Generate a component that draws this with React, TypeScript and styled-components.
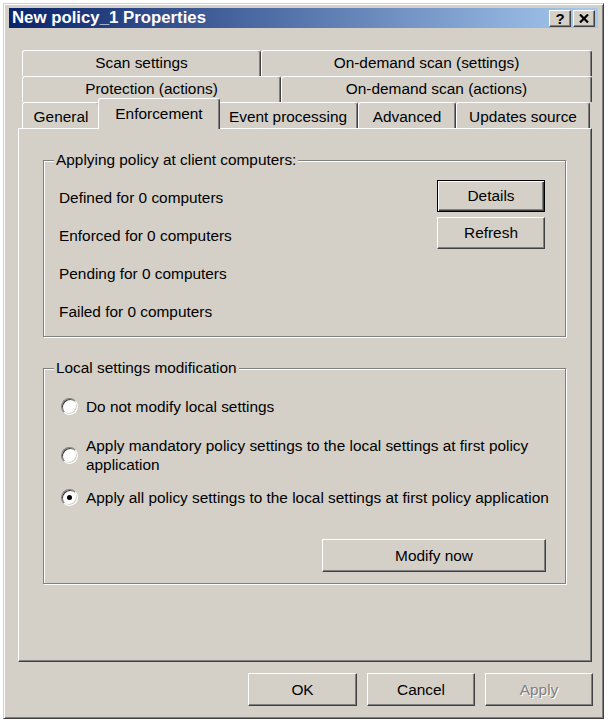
import React from 'react';
import styled, { createGlobalStyle, css } from 'styled-components';

const FACE = '#d4d0c8';
const SHADOW = '#808080';
const DARK = '#404040';

const GlobalStyle = createGlobalStyle`
  html, body {
    margin: 0;
    padding: 0;
    background: #fff;
  }
  body {
    font-family: 'Liberation Sans', Arial, sans-serif;
    font-size: 15.4px;
    color: #000;
  }
`;

const Window = styled.div`
  box-sizing: border-box;
  width: 601px;
  height: 716px;
  margin: 3px 0 0 3px;
  background: ${FACE};
  border: 1px solid;
  border-color: ${FACE} ${DARK} ${DARK} ${FACE};
  box-shadow: inset 1px 1px #fff, inset -1px -1px ${SHADOW};
  padding: 4px 5px 0 5px;
  display: flex;
  flex-direction: column;
`;

const TitleBar = styled.div`
  height: 20px;
  flex: none;
  display: flex;
  align-items: center;
  justify-content: space-between;
  padding: 0 3px;
  background: linear-gradient(to right, #0a246a, #a6caf0);
`;

const Title = styled.span`
  color: #fff;
  font-weight: bold;
  font-size: 16.8px;
`;

const CaptionButtons = styled.div`
  display: flex;
  gap: 2px;
`;

const CaptionButton = styled.div`
  box-sizing: border-box;
  width: 22px;
  height: 17px;
  display: flex;
  align-items: center;
  justify-content: center;
  background: ${FACE};
  border: 1px solid;
  border-color: #fff ${DARK} ${DARK} #fff;
  box-shadow: inset -1px -1px ${SHADOW};
  font-weight: bold;
  font-size: 15px;
  line-height: 1;
`;

const Body = styled.div`
  padding: 22px 6px 0 9px;
`;

const TabStrip = styled.div`
  margin-left: 4px;
  width: 570px;
  display: flex;
  flex-direction: column;
`;

const TabRow = styled.div`
  display: flex;
  height: 26px;
`;

const Tab = styled.div<{ $w: number; $active?: boolean; $front?: boolean }>`
  box-sizing: border-box;
  flex: none;
  width: ${(p) => p.$w}px;
  height: 26px;
  display: flex;
  align-items: center;
  justify-content: center;
  white-space: nowrap;
  background: ${FACE};
  border-top: 1px solid #fff;
  border-left: 1px solid #fff;
  border-right: 1px solid ${DARK};
  box-shadow: inset -1px 0 ${SHADOW};
  border-radius: 3px 3px 0 0;
  padding-bottom: 1px;
  padding-top: ${(p) => (p.$front ? 4 : 0)}px;
  ${(p) =>
    p.$active &&
    css`
      position: relative;
      z-index: 1;
      width: ${p.$w + 4}px;
      height: 31px;
      margin: -4px -2px -1px;
      padding-bottom: 4px;
    `}
`;

const Panel = styled.div`
  box-sizing: border-box;
  height: 534px;
  border: 1px solid;
  border-color: #fff ${DARK} ${DARK} #fff;
  box-shadow: inset -1px -1px ${SHADOW};
  padding: 22px 0 0 24px;
`;

const GroupBox = styled.fieldset<{ $pad: string; $gap?: number }>`
  box-sizing: border-box;
  width: 523px;
  margin: ${(p) => p.$gap ?? 0}px 0 0 0;
  padding: ${(p) => p.$pad};
  border: 1px solid ${SHADOW};
  box-shadow: inset 1px 1px #fff, 1px 1px #fff;
  min-inline-size: 0;
`;

const Legend = styled.legend`
  padding: 0 2px;
  line-height: 18px;
  background: ${FACE};
`;

const StatusLayout = styled.div`
  display: flex;
  justify-content: space-between;
  align-items: flex-start;
`;

const StatusList = styled.div`
  display: flex;
  flex-direction: column;
  gap: 20px;
  padding: 9px 0 0 5px;
  line-height: 18px;
`;

const ButtonColumn = styled.div`
  display: flex;
  flex-direction: column;
  gap: 5px;
`;

const Button = styled.button<{ $w: number; $h?: number; $default?: boolean }>`
  box-sizing: border-box;
  width: ${(p) => p.$w}px;
  height: ${(p) => p.$h ?? 33}px;
  padding: 0;
  font: inherit;
  color: #000;
  background: ${FACE};
  border: 1px solid;
  border-color: #fff ${DARK} ${DARK} #fff;
  box-shadow: inset -1px -1px ${SHADOW};
  cursor: default;
  &:disabled {
    color: ${SHADOW};
    text-shadow: 1px 1px #fff;
  }
  ${(p) =>
    p.$default &&
    css`
      border-color: #000;
      box-shadow: inset 1px 1px #fff, inset -1px -1px ${DARK},
        inset -2px -2px ${SHADOW};
    `}
`;

const RadioRow = styled.label<{ $top: number; $nowrap?: boolean }>`
  display: flex;
  align-items: center;
  gap: 8px;
  margin-top: ${(p) => p.$top}px;
  padding-left: 7px;
  line-height: 19px;
  white-space: ${(p) => (p.$nowrap ? 'nowrap' : 'normal')};
`;

const RadioMark = styled.span<{ $checked?: boolean }>`
  box-sizing: border-box;
  flex: none;
  width: 17px;
  height: 17px;
  border-radius: 50%;
  border: 1px solid;
  border-color: ${SHADOW} #fff #fff ${SHADOW};
  box-shadow: inset 1px 1px ${DARK}, inset -1px -1px ${FACE};
  background: #fff;
  display: flex;
  align-items: center;
  justify-content: center;
  &::after {
    content: '';
    display: ${(p) => (p.$checked ? 'block' : 'none')};
    width: 5px;
    height: 5px;
    border-radius: 50%;
    background: #000;
  }
`;

const ModifyRow = styled.div`
  display: flex;
  justify-content: flex-end;
  margin-top: 32px;
`;

const Footer = styled.div`
  display: flex;
  justify-content: flex-end;
  gap: 10px;
  margin-top: 11px;
  padding-right: 5px;
`;

const tabRows = [
  [
    { label: 'Scan settings', w: 239 },
    { label: 'On-demand scan (settings)', w: 331 },
  ],
  [
    { label: 'Protection (actions)', w: 259 },
    { label: 'On-demand scan (actions)', w: 311 },
  ],
  [
    { label: 'General', w: 78 },
    { label: 'Enforcement', w: 118, active: true },
    { label: 'Event processing', w: 140 },
    { label: 'Advanced', w: 98 },
    { label: 'Updates source', w: 134 },
  ],
];

const statusLines = [
  'Defined for 0 computers',
  'Enforced for 0 computers',
  'Pending for 0 computers',
  'Failed for 0 computers',
];

const CloseGlyph = () => (
  <svg width="10" height="9" viewBox="0 0 10 9">
    <path d="M1 0.5 L9 8.5 M9 0.5 L1 8.5" stroke="#000" strokeWidth="2.2" />
  </svg>
);

export default function App() {
  return (
    <>
      <GlobalStyle />
      <Window>
        <TitleBar>
          <Title>New policy_1 Properties</Title>
          <CaptionButtons>
            <CaptionButton>?</CaptionButton>
            <CaptionButton>
              <CloseGlyph />
            </CaptionButton>
          </CaptionButtons>
        </TitleBar>

        <Body>
          <TabStrip>
            {tabRows.map((row, i) => (
              <TabRow key={i}>
                {row.map((t) => (
                  <Tab
                    key={t.label}
                    $w={t.w}
                    $active={'active' in t}
                    $front={i === tabRows.length - 1}
                  >
                    {t.label}
                  </Tab>
                ))}
              </TabRow>
            ))}
          </TabStrip>

          <Panel>
            <GroupBox $pad="11px 20px 15px 10px">
              <Legend>Applying policy at client computers:</Legend>
              <StatusLayout>
                <StatusList>
                  {statusLines.map((s) => (
                    <span key={s}>{s}</span>
                  ))}
                </StatusList>
                <ButtonColumn>
                  <Button $w={108} $h={32} $default>
                    Details
                  </Button>
                  <Button $w={108} $h={32}>
                    Refresh
                  </Button>
                </ButtonColumn>
              </StatusLayout>
            </GroupBox>

            <GroupBox $pad="20px 19px 11px 10px" $gap={22}>
              <Legend>Local settings modification</Legend>
              <RadioRow $top={0}>
                <RadioMark />
                Do not modify local settings
              </RadioRow>
              <RadioRow $top={20}>
                <RadioMark />
                <span>
                  Apply mandatory policy settings to the local settings at first policy
                  <br />
                  application
                </span>
              </RadioRow>
              <RadioRow $top={14} $nowrap>
                <RadioMark $checked />
                Apply all policy settings to the local settings at first policy application
              </RadioRow>
              <ModifyRow>
                <Button $w={224}>Modify now</Button>
              </ModifyRow>
            </GroupBox>
          </Panel>
        </Body>

        <Footer>
          <Button $w={109}>OK</Button>
          <Button $w={108}>Cancel</Button>
          <Button $w={108} disabled>
            Apply
          </Button>
        </Footer>
      </Window>
    </>
  );
}
